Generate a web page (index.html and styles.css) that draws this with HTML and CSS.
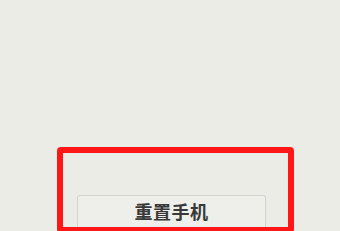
FILE: index.html
```html
<!DOCTYPE html>
<html lang="zh">
<head>
<meta charset="utf-8">
<link rel="stylesheet" href="styles.css">
</head>
<body>
<div class="screen">
  <div class="highlight">
    <div class="reset-btn">重置手机</div>
  </div>
</div>
</body>
</html>
```
FILE: styles.css
```css
html, body {
  margin: 0;
  padding: 0;
  width: 340px;
  height: 231px;
  overflow: hidden;
  background: #ececE7;
}
.screen {
  padding: 147px 0 0 57px;
  font-family: "Noto Sans CJK SC", "Noto Sans", sans-serif;
}
.highlight {
  box-sizing: border-box;
  width: 237px;
  height: 86px;
  border: 6px solid #ff1616;
  border-radius: 4px;
  padding: 42px 0 0 14px;
}
.reset-btn {
  box-sizing: border-box;
  width: 189px;
  height: 32px;
  border: 1px solid #d3d3ce;
  border-bottom: none;
  border-radius: 3px 3px 0 0;
  background: #eeeeea;
  color: #383838;
  font-size: 18px;
  font-weight: 700;
  line-height: 18px;
  padding-top: 6px;
  text-align: center;
  letter-spacing: 0.5px;
}
```
